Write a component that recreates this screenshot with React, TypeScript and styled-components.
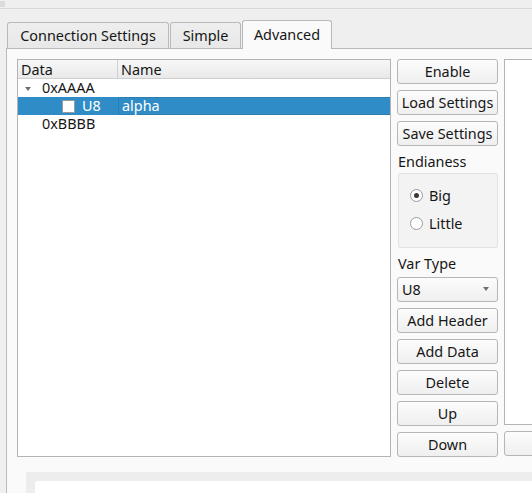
import React from "react";
import styled, { createGlobalStyle } from "styled-components";

const GlobalStyle = createGlobalStyle`
  html, body { margin: 0; padding: 0; background: #efefef; }
  body { font-family: "Noto Sans", "DejaVu Sans", sans-serif; font-size: 14.4px; color: #161616; }
  * { box-sizing: border-box; }
`;

const Window = styled.div`
  width: 532px;
  height: 493px;
  overflow: hidden;
  background: #efefef;
  display: flex;
  flex-direction: column;
`;

const TopStrip = styled.div`
  height: 9px;
  flex: none;
  border-bottom: 1px solid #d8d8d8;
  position: relative;
`;

const Grip = styled.div`
  position: absolute;
  left: 0;
  top: 1px;
  width: 5px;
  height: 6px;
  background-image: radial-gradient(circle, #c4c4c4 0.6px, transparent 0.8px);
  background-size: 2px 2px;
`;

const TabBar = styled.div`
  margin-top: 11px;
  padding-left: 7px;
  height: 28px;
  display: flex;
  align-items: flex-end;
  flex: none;
`;

const Tab = styled.div<{ $w: number; $active?: boolean }>`
  width: ${(p) => p.$w}px;
  height: ${(p) => (p.$active ? 29 : 26)}px;
  margin-bottom: ${(p) => (p.$active ? -1 : 0)}px;
  border: 1px solid #b9b9b9;
  border-bottom: none;
  border-radius: 3px 3px 0 0;
  background: ${(p) => (p.$active ? "#fafafa" : "linear-gradient(#eeeeee, #e8e8e8)")};
  position: relative;
  z-index: ${(p) => (p.$active ? 2 : 1)};
  display: flex;
  align-items: center;
  justify-content: center;
  padding-bottom: ${(p) => (p.$active ? 2 : 1)}px;
  & + & { margin-left: ${(p) => (p.$active ? 1 : -1)}px; }
`;

const Panel = styled.div`
  flex: 1;
  margin-left: 6px;
  border-top: 1px solid #b9b9b9;
  border-left: 1px solid #b9b9b9;
  background: #fafafa;
  padding: 10px 0 0 10px;
  display: flex;
  flex-direction: column;
  position: relative;
  z-index: 1;
`;

const Grid = styled.div`
  display: grid;
  grid-template-columns: 374px 101px 120px;
  column-gap: 6px;
  height: 398px;
  flex: none;
`;

const Tree = styled.div`
  border: 1px solid #b4b4b4;
  background: #ffffff;
  display: flex;
  flex-direction: column;
`;

const Header = styled.div`
  height: 19px;
  flex: none;
  display: grid;
  grid-template-columns: 100px 1fr;
  background: linear-gradient(#f7f7f7, #e9e9e9);
  border-bottom: 1px solid #cfcfcf;
`;

const HeaderCell = styled.div`
  padding: 1px 0 0 3px;
  line-height: 18px;
  overflow: hidden;
  border-right: 1px solid #cfcfcf;
  &:last-child { border-right: none; }
`;

const Row = styled.div<{ $sel?: boolean }>`
  height: 18px;
  flex: none;
  display: grid;
  grid-template-columns: 100px 1fr;
  background: ${(p) => (p.$sel ? "#308cc6" : "transparent")};
  color: ${(p) => (p.$sel ? "#ffffff" : "#161616")};
  line-height: 18px;
`;

const DataCell = styled.div<{ $indent: number }>`
  display: flex;
  align-items: center;
  padding-left: ${(p) => p.$indent}px;
  white-space: nowrap;
`;

const NameCell = styled.div<{ $focus?: boolean }>`
  padding-left: 3px;
  border: 1px solid ${(p) => (p.$focus ? "#2b7db2" : "transparent")};
  border-right: none;
  line-height: 16px;
`;

const Arrow = styled.span`
  width: 0;
  height: 0;
  border-left: 3px solid transparent;
  border-right: 3px solid transparent;
  border-top: 4px solid #707070;
  margin-right: 11px;
  margin-top: 1px;
`;

const Check = styled.span`
  width: 13px;
  height: 13px;
  background: #ffffff;
  border: 1px solid #9a9a9a;
  border-radius: 1px;
  margin-right: 7px;
`;

const Column = styled.div`
  display: flex;
  flex-direction: column;
  gap: 6px;
`;

const Button = styled.div`
  height: 25px;
  flex: none;
  border: 1px solid #b6b6b6;
  border-radius: 3px;
  background: linear-gradient(#fcfcfc, #efefef);
  display: flex;
  align-items: center;
  justify-content: center;
  white-space: nowrap;
  padding-bottom: 1px;
`;

const Section = styled.div`
  display: flex;
  flex-direction: column;
`;

const Label = styled.div<{ $h: number }>`
  height: ${(p) => p.$h}px;
  line-height: 20px;
  padding-left: 1px;
`;

const Group = styled.div`
  height: 75px;
  margin-left: 1px;
  border: 1px solid #e2e2e2;
  border-radius: 2px;
  background: #f3f3f3;
  display: flex;
  flex-direction: column;
  padding: 12px 0 0 11px;
  gap: 9px;
`;

const RadioRow = styled.div`
  display: flex;
  align-items: center;
  height: 19px;
`;

const RadioCircle = styled.span<{ $on?: boolean }>`
  width: 13px;
  height: 13px;
  border-radius: 50%;
  border: 1px solid #9c9c9c;
  background: #ffffff;
  margin-right: 6px;
  display: flex;
  align-items: center;
  justify-content: center;
  &::after {
    content: "";
    display: ${(p) => (p.$on ? "block" : "none")};
    width: 5px;
    height: 5px;
    border-radius: 50%;
    background: #3a3a3a;
  }
`;

const Combo = styled(Button)`
  justify-content: space-between;
  padding: 0 8px 1px 4px;
`;

const ComboArrow = styled.span`
  width: 0;
  height: 0;
  border-left: 3px solid transparent;
  border-right: 3px solid transparent;
  border-top: 4px solid #707070;
`;

const SidePanel = styled.div`
  height: 366px;
  border: 1px solid #b4b4b4;
  background: #ffffff;
`;

const Footer = styled.div`
  margin: 15px 0 0 9px;
  flex: 1;
  background: #ededed;
  padding: 9px 0 0 9px;
  display: flex;
`;

const FooterInner = styled.div`
  flex: 1;
  background: #ffffff;
  border-radius: 3px 0 0 0;
`;

export default function App() {
  return (
    <>
      <GlobalStyle />
      <Window>
        <TopStrip>
          <Grip />
        </TopStrip>
        <TabBar>
          <Tab $w={162}>Connection Settings</Tab>
          <Tab $w={71}>Simple</Tab>
          <Tab $w={90} $active>
            Advanced
          </Tab>
        </TabBar>
        <Panel>
          <Grid>
            <Tree>
              <Header>
                <HeaderCell>Data</HeaderCell>
                <HeaderCell>Name</HeaderCell>
              </Header>
              <Row>
                <DataCell $indent={7}>
                  <Arrow />
                  0xAAAA
                </DataCell>
                <NameCell />
              </Row>
              <Row $sel>
                <DataCell $indent={44}>
                  <Check />
                  U8
                </DataCell>
                <NameCell $focus>alpha</NameCell>
              </Row>
              <Row>
                <DataCell $indent={24}>0xBBBB</DataCell>
                <NameCell />
              </Row>
            </Tree>
            <Column>
              <Button>Enable</Button>
              <Button>Load Settings</Button>
              <Button>Save Settings</Button>
              <Section>
                <Label $h={21}>Endianess</Label>
                <Group>
                  <RadioRow>
                    <RadioCircle $on />
                    Big
                  </RadioRow>
                  <RadioRow>
                    <RadioCircle />
                    Little
                  </RadioRow>
                </Group>
              </Section>
              <Section>
                <Label $h={23}>Var Type</Label>
                <Combo>
                  U8
                  <ComboArrow />
                </Combo>
              </Section>
              <Button>Add Header</Button>
              <Button>Add Data</Button>
              <Button>Delete</Button>
              <Button>Up</Button>
              <Button>Down</Button>
            </Column>
            <Column>
              <SidePanel />
              <Button />
            </Column>
          </Grid>
          <Footer>
            <FooterInner />
          </Footer>
        </Panel>
      </Window>
    </>
  );
}
